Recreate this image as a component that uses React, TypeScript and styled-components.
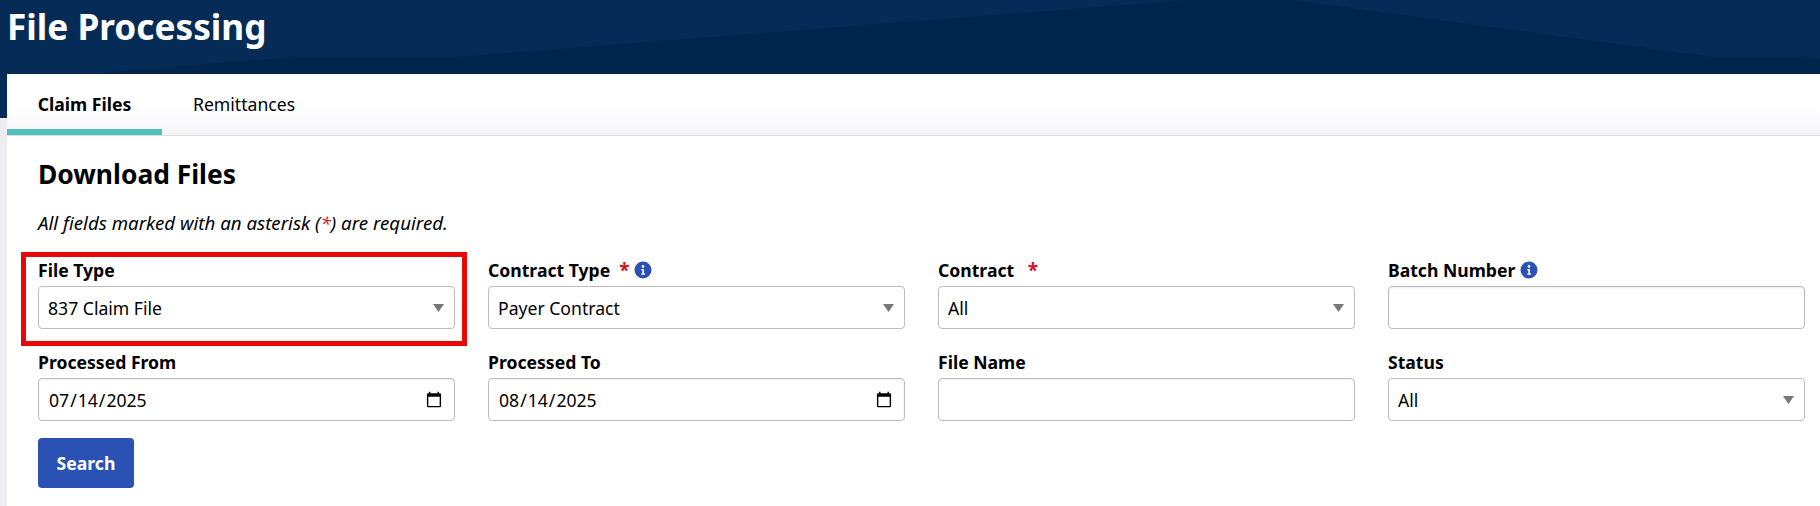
import React from "react";
import styled, { createGlobalStyle } from "styled-components";

const GlobalStyle = createGlobalStyle`
  html, body {
    margin: 0;
    padding: 0;
    background: #eeeef2;
    font-family: "Noto Sans", "Open Sans", sans-serif;
    color: #000;
  }
  * { box-sizing: border-box; }
`;

const Page = styled.div`
  width: 1820px;
  height: 506px;
  overflow: hidden;
  position: relative;
`;

const Banner = styled.header`
  position: relative;
  height: 118px;
  margin-bottom: -44px;
  background: #062b57;
  overflow: hidden;
`;

const BannerShape = styled.svg`
  position: absolute;
  left: 0;
  top: 0;
`;

const Title = styled.h1`
  position: relative;
  margin: 0;
  padding: 2px 0 0 7px;
  font-size: 35.2px;
  line-height: 48px;
  font-weight: 700;
  color: #fff;
`;

const Card = styled.main`
  position: relative;
  margin-left: 7px;
  height: 432px;
  background: #fff;
`;

const TabBar = styled.nav`
  display: flex;
  height: 62px;
  border-bottom: 1px solid #dcdce2;
  background: linear-gradient(#fff 0, #fff 55%, #f4f4f7 100%);
`;

const Tab = styled.div<{ $active?: boolean }>`
  width: ${(p) => (p.$active ? "155px" : "172px")};
  height: 61px;
  padding-top: 18px;
  padding-left: ${(p) => (p.$active ? "0" : "31px")};
  text-align: ${(p) => (p.$active ? "center" : "left")};
  font-size: 17.6px;
  line-height: 24px;
  font-weight: ${(p) => (p.$active ? 700 : 400)};
  border-bottom: ${(p) => (p.$active ? "6px solid #4fc3bb" : "none")};
`;

const Content = styled.section`
  padding: 20px 15px 0 31px;
`;

const Heading = styled.h2`
  margin: 0;
  font-size: 26.4px;
  line-height: 36px;
  font-weight: 700;
`;

const Note = styled.p`
  margin: 19px 0 0;
  font-size: 18.7px;
  line-height: 24px;
  font-style: italic;
`;

const Required = styled.span`
  color: #d0142c;
`;

const Grid = styled.div`
  display: grid;
  grid-template-columns: repeat(4, 417px);
  column-gap: 33px;
  row-gap: 21px;
  margin-top: 23px;
`;

const Field = styled.div`
  display: flex;
  flex-direction: column;
`;

const Label = styled.label`
  display: flex;
  align-items: center;
  height: 24px;
  margin-bottom: 4px;
  font-size: 17.6px;
  font-weight: 700;
  white-space: pre;
`;

const Star = styled.span`
  color: #d0142c;
  font-size: 19px;
  margin-left: 9px;
`;

const InfoIcon = styled.svg`
  margin-left: 5px;
  flex: none;
`;

const controlStyle = `
  width: 100%;
  height: 43px;
  padding: 0 9px;
  border: 1px solid #bdbdbd;
  border-radius: 4px;
  background-color: #fff;
  font-family: "Noto Sans", "Open Sans", sans-serif;
  font-size: 17.6px;
  color: #000;
  outline: none;
`;

const Select = styled.select`
  ${controlStyle}
  appearance: none;
  background-image: url("data:image/svg+xml,%3Csvg xmlns='http://www.w3.org/2000/svg' width='11' height='8'%3E%3Cpath d='M0 0h11L5.5 8z' fill='%23777'/%3E%3C/svg%3E");
  background-repeat: no-repeat;
  background-position: right 10px center;
`;

const Input = styled.input`
  ${controlStyle}
  box-shadow: inset 0 1px 2px rgba(0, 0, 0, 0.08);
`;

const SearchButton = styled.button`
  display: block;
  width: 96px;
  height: 50px;
  margin-top: 17px;
  border: none;
  border-radius: 4px;
  background: #2a52b4;
  color: #fff;
  font-family: "Noto Sans", "Open Sans", sans-serif;
  font-size: 17.6px;
  font-weight: 700;
`;

const Highlight = styled.div`
  position: absolute;
  left: 21px;
  top: 252px;
  width: 446px;
  height: 94px;
  border: 5px solid #e80808;
  pointer-events: none;
`;

const Info = () => (
  <InfoIcon width="18" height="18" viewBox="0 0 18 18">
    <circle cx="9" cy="9" r="8.5" fill="#2a52b4" />
    <circle cx="9" cy="5.4" r="1.3" fill="#fff" />
    <path d="M7.3 8h2.7v4.6h1v1.2H7.3v-1.2h1V9.2h-1z" fill="#fff" />
  </InfoIcon>
);

export default function App() {
  return (
    <Page>
      <GlobalStyle />
      <Banner>
        <BannerShape width="1820" height="118" viewBox="0 0 1820 118">
          <path d="M90 74L293 57H462L520 52L1190 0H1291L1712 57H1805L1820 59V118H90z" fill="#00254c" />
        </BannerShape>
        <Title>File Processing</Title>
      </Banner>
      <Card>
        <TabBar>
          <Tab $active>Claim Files</Tab>
          <Tab>Remittances</Tab>
        </TabBar>
        <Content>
          <Heading>Download Files</Heading>
          <Note>
            All fields marked with an asterisk (<Required>*</Required>) are required.
          </Note>
          <Grid>
            <Field>
              <Label>File Type</Label>
              <Select defaultValue="837 Claim File">
                <option>837 Claim File</option>
              </Select>
            </Field>
            <Field>
              <Label>
                Contract Type<Star>*</Star>
                <Info />
              </Label>
              <Select defaultValue="Payer Contract">
                <option>Payer Contract</option>
              </Select>
            </Field>
            <Field>
              <Label>
                Contract <Star>*</Star>
              </Label>
              <Select defaultValue="All">
                <option>All</option>
              </Select>
            </Field>
            <Field>
              <Label>
                Batch Number
                <Info />
              </Label>
              <Input type="text" />
            </Field>
            <Field>
              <Label>Processed From</Label>
              <Input type="date" defaultValue="2025-07-14" />
            </Field>
            <Field>
              <Label>Processed To</Label>
              <Input type="date" defaultValue="2025-08-14" />
            </Field>
            <Field>
              <Label>File Name</Label>
              <Input type="text" />
            </Field>
            <Field>
              <Label>Status</Label>
              <Select defaultValue="All">
                <option>All</option>
              </Select>
            </Field>
          </Grid>
          <SearchButton>Search</SearchButton>
        </Content>
      </Card>
      <Highlight />
    </Page>
  );
}
